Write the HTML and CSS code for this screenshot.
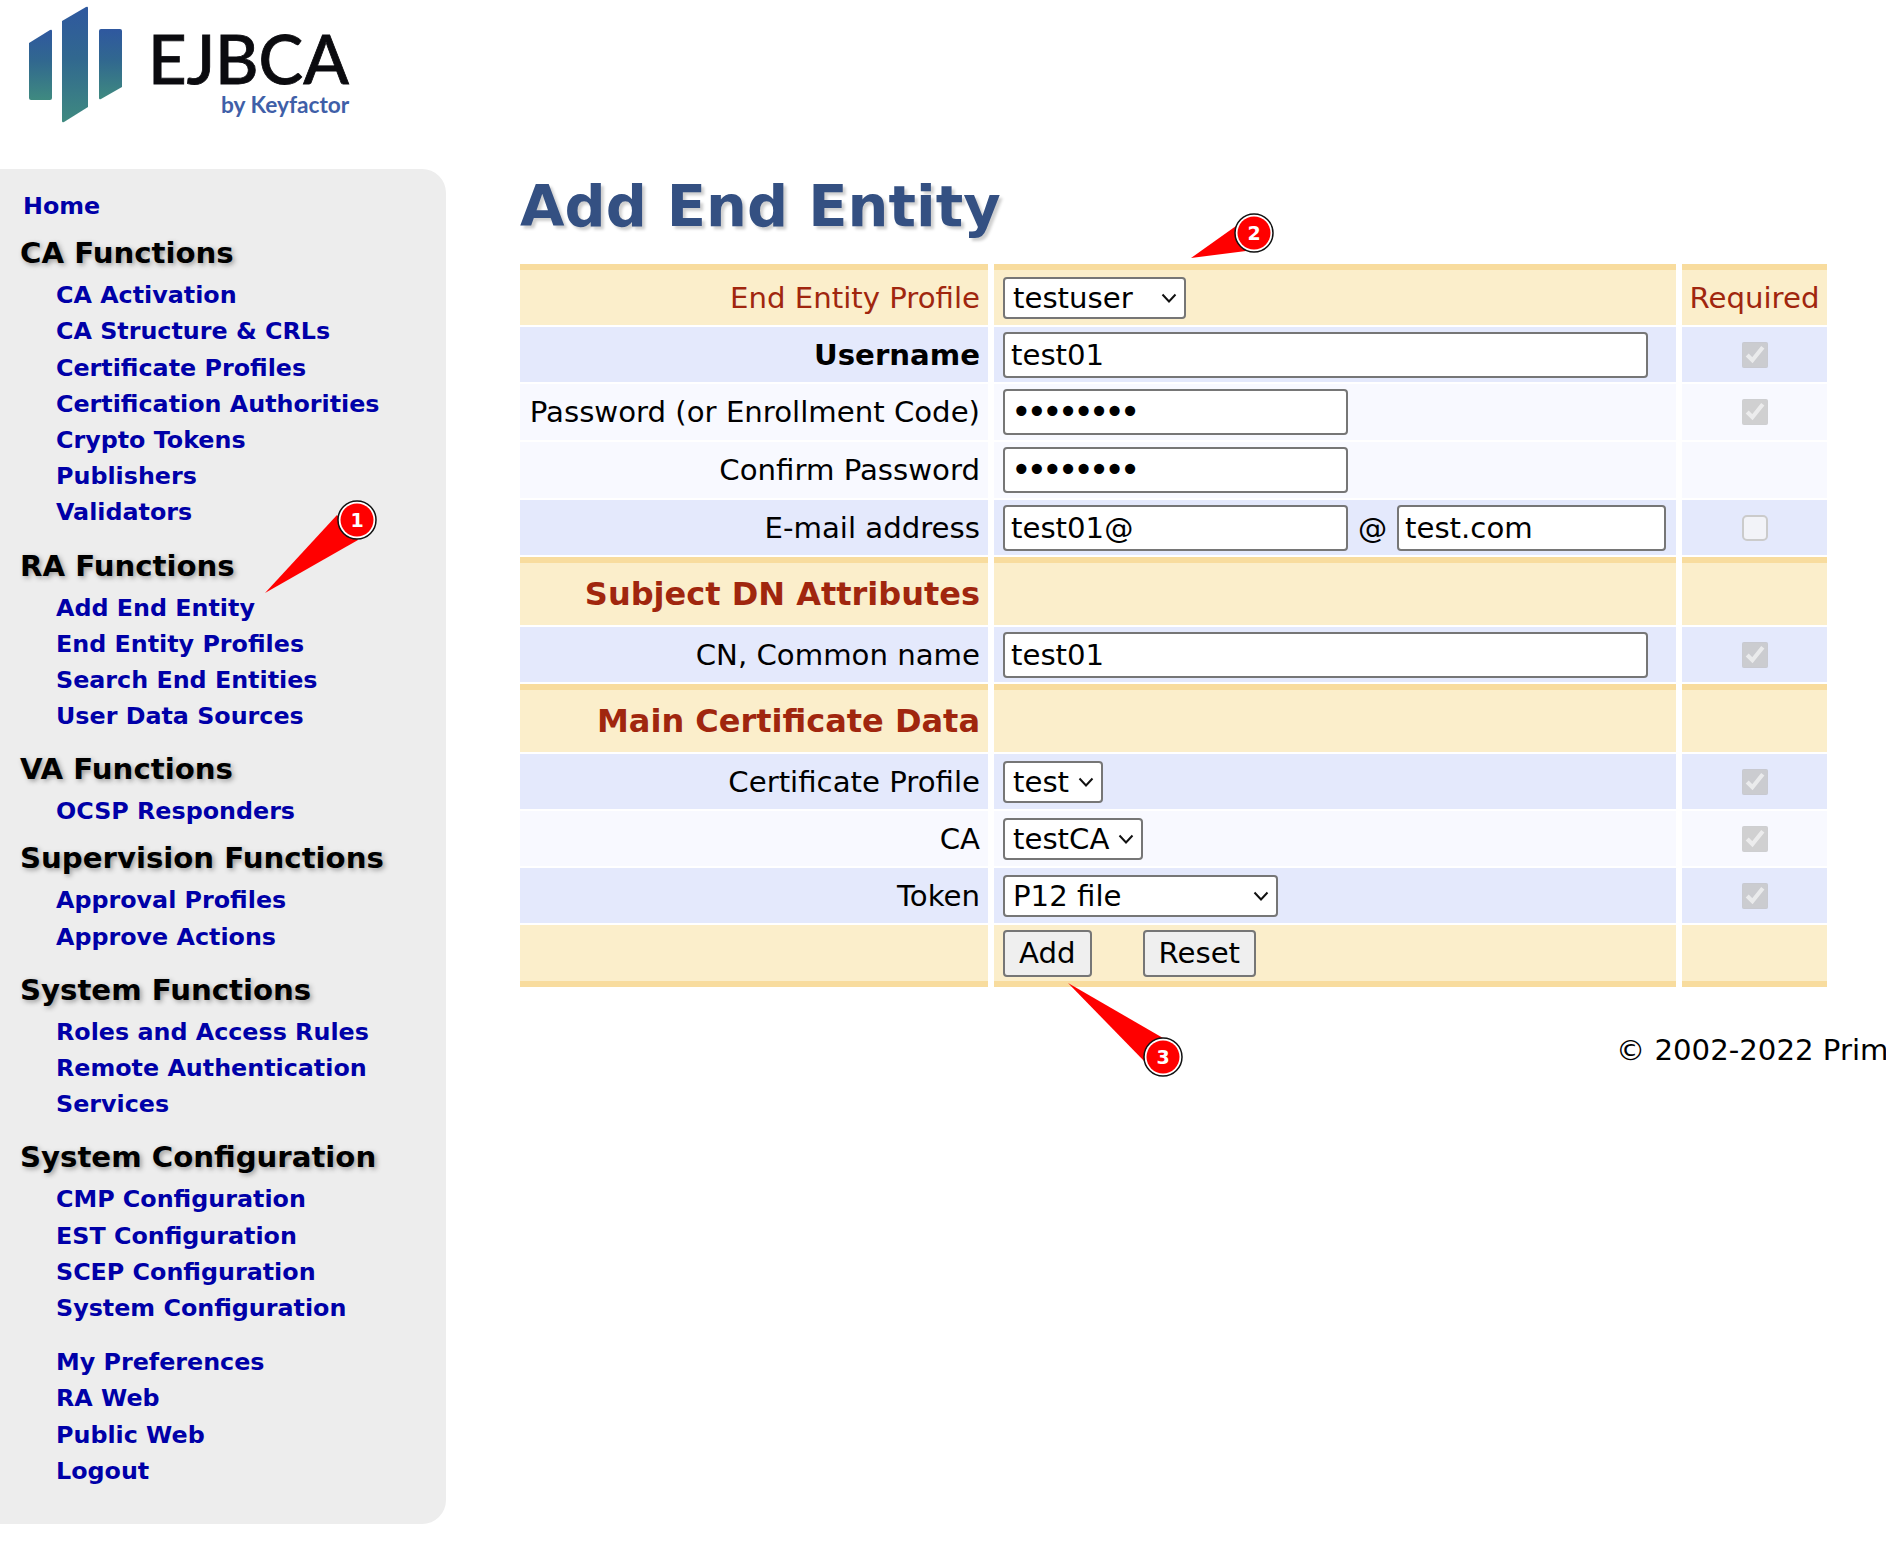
FILE: index.html
```html
<!DOCTYPE html>
<html lang="en">
<head>
<meta charset="utf-8">
<title>Add End Entity</title>
<link rel="stylesheet" href="styles.css">
</head>
<body>
<header class="banner">
  <svg class="logo" width="360" height="130" viewBox="0 0 360 130" role="img" aria-label="EJBCA by Keyfactor">
    <defs>
      <linearGradient id="barfill" x1="0" y1="0" x2="0" y2="1">
        <stop offset="0" stop-color="#2f589f"/>
        <stop offset="0.45" stop-color="#31688f"/>
        <stop offset="1" stop-color="#3f8a80"/>
      </linearGradient>
    </defs>
    <path fill="url(#barfill)" d="M29 43 50 30q2-1 2 1V98q0 2-2 2H31q-2 0-2-2Z"/>
    <path fill="url(#barfill)" d="M62 21 86 7q2-1 2 1V107l-24 15q-2 1-2-1Z"/>
    <path fill="url(#barfill)" d="M99 31q0-2 2-2h19q2 0 2 2V87l-21 12q-2 1-2-1Z"/>
    <text class="logo-main" x="148" y="84">EJBCA</text>
    <text class="logo-sub" x="221" y="113">by Keyfactor</text>
  </svg>
</header>

<div class="layout">
  <nav class="sidebar">
    <ul class="nav-top"><li><a href="#">Home</a></li></ul>

    <h3 class="tight">CA Functions</h3>
    <ul>
      <li><a href="#">CA Activation</a></li>
      <li><a href="#">CA Structure &amp; CRLs</a></li>
      <li><a href="#">Certificate Profiles</a></li>
      <li><a href="#">Certification Authorities</a></li>
      <li><a href="#">Crypto Tokens</a></li>
      <li><a href="#">Publishers</a></li>
      <li><a href="#">Validators</a></li>
    </ul>

    <h3>RA Functions</h3>
    <ul>
      <li><a href="#">Add End Entity</a></li>
      <li><a href="#">End Entity Profiles</a></li>
      <li><a href="#">Search End Entities</a></li>
      <li><a href="#">User Data Sources</a></li>
    </ul>

    <h3>VA Functions</h3>
    <ul>
      <li><a href="#">OCSP Responders</a></li>
    </ul>

    <h3 class="tight">Supervision Functions</h3>
    <ul>
      <li><a href="#">Approval Profiles</a></li>
      <li><a href="#">Approve Actions</a></li>
    </ul>

    <h3>System Functions</h3>
    <ul>
      <li><a href="#">Roles and Access Rules</a></li>
      <li><a href="#">Remote Authentication</a></li>
      <li><a href="#">Services</a></li>
    </ul>

    <h3>System Configuration</h3>
    <ul>
      <li><a href="#">CMP Configuration</a></li>
      <li><a href="#">EST Configuration</a></li>
      <li><a href="#">SCEP Configuration</a></li>
      <li><a href="#">System Configuration</a></li>
    </ul>

    <ul class="nav-bottom">
      <li><a href="#">My Preferences</a></li>
      <li><a href="#">RA Web</a></li>
      <li><a href="#">Public Web</a></li>
      <li><a href="#">Logout</a></li>
    </ul>
  </nav>

  <main class="content">
    <h1>Add End Entity</h1>
    <table class="form-table">
      <colgroup><col class="c1"><col class="c2"><col class="c3"></colgroup>
      <tr class="r-head first">
        <td class="label accent">End Entity Profile</td>
        <td><select class="w-profile"><option>testuser</option><option>EMPTY</option></select></td>
        <td class="req accent">Required</td>
      </tr>
      <tr class="r-blue">
        <td class="label"><strong>Username</strong></td>
        <td><input class="w-full" type="text" value="test01"></td>
        <td class="req"><input class="check" type="checkbox" checked disabled></td>
      </tr>
      <tr class="r-light">
        <td class="label">Password (or Enrollment Code)</td>
        <td><input class="w-half" type="password" value="12345678"></td>
        <td class="req"><input class="check" type="checkbox" checked disabled></td>
      </tr>
      <tr class="r-light">
        <td class="label">Confirm Password</td>
        <td><input class="w-half" type="password" value="12345678"></td>
        <td class="req"></td>
      </tr>
      <tr class="r-blue">
        <td class="label">E-mail address</td>
        <td class="email"><input class="w-half" type="text" value="test01@"><span class="at">@</span><input class="w-domain" type="text" value="test.com"></td>
        <td class="req"><input class="check empty" type="checkbox" disabled></td>
      </tr>
      <tr class="r-head section">
        <td class="label sec-title">Subject DN Attributes</td>
        <td></td>
        <td></td>
      </tr>
      <tr class="r-blue">
        <td class="label">CN, Common name</td>
        <td><input class="w-full" type="text" value="test01"></td>
        <td class="req"><input class="check" type="checkbox" checked disabled></td>
      </tr>
      <tr class="r-head section">
        <td class="label sec-title">Main Certificate Data</td>
        <td></td>
        <td></td>
      </tr>
      <tr class="r-blue">
        <td class="label">Certificate Profile</td>
        <td><select class="w-test"><option>test</option></select></td>
        <td class="req"><input class="check" type="checkbox" checked disabled></td>
      </tr>
      <tr class="r-light r-short">
        <td class="label">CA</td>
        <td><select class="w-ca"><option>testCA</option></select></td>
        <td class="req"><input class="check" type="checkbox" checked disabled></td>
      </tr>
      <tr class="r-blue">
        <td class="label">Token</td>
        <td><select class="w-token"><option>P12 file</option><option>User Generated</option></select></td>
        <td class="req"><input class="check" type="checkbox" checked disabled></td>
      </tr>
      <tr class="r-head last">
        <td></td>
        <td class="actions"><button type="button">Add</button><button type="button">Reset</button></td>
        <td></td>
      </tr>
    </table>
    <footer class="copyright">© 2002-2022 PrimeKey Solutions AB.</footer>
  </main>
</div>

<svg class="callouts" width="1886" height="1564" viewBox="0 0 1886 1564" aria-hidden="true">
  <g class="callout">
    <path class="tail" d="M265 593 337 515 358 540Z"/>
    <circle class="ring" cx="357" cy="520" r="19"/>
    <circle class="dot" cx="357" cy="520" r="16.5"/>
    <text x="357" y="527">1</text>
  </g>
  <g class="callout">
    <path class="tail" d="M1191 258 1236 226 1246 251Z"/>
    <circle class="ring" cx="1254" cy="233" r="19"/>
    <circle class="dot" cx="1254" cy="233" r="16.5"/>
    <text x="1254" y="240">2</text>
  </g>
  <g class="callout">
    <path class="tail" d="M1068 983 1163 1038 1145 1062Z"/>
    <circle class="ring" cx="1163" cy="1057" r="19"/>
    <circle class="dot" cx="1163" cy="1057" r="16.5"/>
    <text x="1163" y="1064">3</text>
  </g>
</svg>
</body>
</html>
```

FILE: styles.css
```css
* { box-sizing: border-box; }

html, body {
  margin: 0;
  padding: 0;
  overflow-x: hidden;
  background: #fff;
}

body {
  position: relative;
  min-height: 1564px;
  font-family: "DejaVu Sans", Verdana, sans-serif;
  font-size: 29.2px;
  color: #000;
}

.banner {
  height: 169px;
}

.logo { display: block; }

.logo-main {
  font-family: "Lato", sans-serif;
  font-size: 67px;
  font-weight: 500;
  fill: #0b0b0f;
  stroke: #0b0b0f;
  stroke-width: 0.8px;
}

.logo-sub {
  font-family: "Lato", sans-serif;
  font-size: 22.7px;
  font-weight: 700;
  fill: #3f5fa8;
}

.layout {
  display: flex;
  align-items: flex-start;
}

.sidebar {
  flex: 0 0 446px;
  height: 1355px;
  background: #ededed;
  border-radius: 0 24px 24px 0;
  padding: 17px 0 0 20px;
}

.sidebar ul {
  list-style: none;
  margin: 0;
  padding: 0 0 0 36px;
}

.sidebar .nav-top { padding-left: 3px; }

.sidebar li {
  height: 36.2px;
  line-height: 36.2px;
  white-space: nowrap;
}

.sidebar a {
  color: #0000a8;
  font-size: 23.8px;
  font-weight: 700;
  text-decoration: none;
}

.sidebar h3 {
  margin: 13px 0 0;
  height: 46px;
  line-height: 48px;
  font-size: 29.2px;
  font-weight: 700;
  text-shadow: 2px 2px 5px #999;
  white-space: nowrap;
}

.sidebar h3.tight { margin-top: 7px; }

.sidebar .nav-bottom { margin-top: 18px; }

.content {
  flex: 1 1 auto;
  min-width: 0;
  padding: 0 0 0 74px;
}

h1 {
  margin: 0;
  height: 95px;
  line-height: 76px;
  font-size: 57.5px;
  font-weight: 700;
  color: #345082;
  text-shadow: 3px 3px 3px #cfcfcf;
  white-space: nowrap;
}

.form-table {
  table-layout: fixed;
  width: 1319px;
  margin-left: -6px;
  border-collapse: separate;
  border-spacing: 6px 2px;
  margin-top: -2px;
}

.c1 { width: 468px; }
.c2 { width: 682px; }
.c3 { width: 145px; }

.form-table td {
  padding: 0;
  vertical-align: middle;
}

.form-table td:nth-child(2) { padding-left: 9px; }

.r-blue { height: 55px; }
.r-blue td { background: #e4e9fc; }

.r-light { height: 56px; }
.r-light td { background: #f8f9ff; }
.r-short { height: 55px; }

.r-head td { background: #fbeecb; }
.first { height: 61px; }
.first td { border-top: 6px solid #f8dc9e; }
.section { height: 68px; }
.section td { border-top: 6px solid #f8dc9e; }
.last { height: 62px; }
.last td { border-bottom: 6px solid #f8dc9e; }

.label {
  text-align: right;
  padding-right: 8px !important;
  white-space: nowrap;
}

.accent { color: #a0260e; }

.sec-title {
  color: #a0260e;
  font-size: 32px;
  font-weight: 700;
}

.req { text-align: center; }

input[type="text"],
input[type="password"],
select,
button {
  font-family: "DejaVu Sans", Verdana, sans-serif;
  font-size: 29.2px;
  color: #000;
  border: 2px solid #767676;
  border-radius: 4px;
  vertical-align: middle;
  margin: 0;
}

input[type="text"],
input[type="password"] {
  height: 46px;
  padding: 0 6px;
  background: #fff;
}

input[type="password"] {
  font-size: 35px;
  letter-spacing: -5.1px;
}

select {
  height: 42px;
  padding: 0 28px 0 8px;
  appearance: none;
  -webkit-appearance: none;
  background: #fff url("data:image/svg+xml,%3Csvg xmlns='http://www.w3.org/2000/svg' width='16' height='10' viewBox='0 0 16 10'%3E%3Cpath d='M1.5 1.5 8 8.5l6.5-7' fill='none' stroke='%23111' stroke-width='2'/%3E%3C/svg%3E") no-repeat right 7px center;
}

.w-full { width: 645px; }
.w-half { width: 345px; }
.w-domain { width: 269px; }
.w-profile { width: 183px; }
.w-test { width: 100px; }
.w-ca { width: 140px; }
.w-token { width: 275px; }

.at {
  display: inline-block;
  width: 49px;
  text-align: center;
  vertical-align: middle;
}

.check {
  display: block;
  width: 26px;
  height: 26px;
  margin: 0 auto;
}

.check.empty {
  appearance: none;
  -webkit-appearance: none;
  border: 2px solid #cbcbcb;
  border-radius: 5px;
  background: #f2f3f8;
}

button {
  height: 47px;
  padding: 0 14px;
  background: #efefef;
}

.actions button + button { margin-left: 51px; }

.copyright {
  margin-top: 41px;
  padding-left: 1096px;
  line-height: 40px;
  white-space: nowrap;
}

.callouts {
  position: absolute;
  left: 0;
  top: 0;
  pointer-events: none;
}

.tail { fill: #ff0000; }
.ring { fill: #fff; stroke: #111; stroke-width: 1.5; }
.dot { fill: #ff0000; }

.callout text {
  fill: #fff;
  font-family: "DejaVu Sans", sans-serif;
  font-size: 19px;
  font-weight: 700;
  text-anchor: middle;
}
```
